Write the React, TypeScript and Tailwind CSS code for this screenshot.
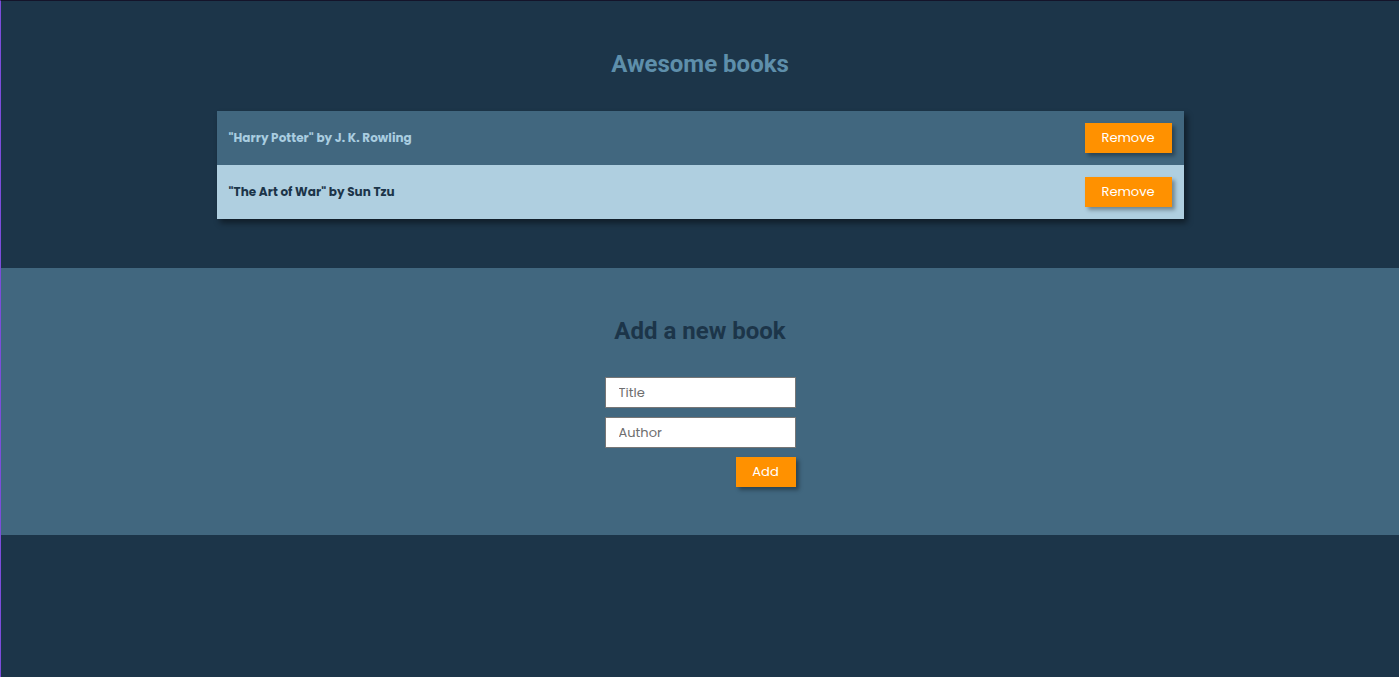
const books = [
  { title: 'Harry Potter', author: 'J. K. Rowling' },
  { title: 'The Art of War', author: 'Sun Tzu' },
]

export default function App() {
  return (
    <div
      className="min-h-[677px] bg-[#1c3549] border-t border-t-[#14142a] border-l border-l-[#7c4ddb]"
      style={{ fontFamily: '"Poppins", "Inter", "Noto Sans", sans-serif' }}
    >
      <section className="pt-[48px] pb-[49px]">
        <h1
          className="text-center text-[24px] leading-[30px] font-bold text-[#5e8fab]"
          style={{ fontFamily: 'Roboto, sans-serif' }}
        >
          Awesome books
        </h1>
        <ul className="w-[967px] mx-auto mt-[32px] shadow-[3px_4px_6px_rgba(0,0,0,0.45)]">
          {books.map((b, i) => (
            <li
              key={b.title}
              className={
                'h-[54px] flex items-center justify-between pl-[12px] pr-[12px] ' +
                (i % 2 === 0 ? 'bg-[#41677f] text-[#a9cde0]' : 'bg-[#afcfe0] text-[#1c3549]')
              }
            >
              <span className="text-[12px] font-bold tracking-[0.05px]">
                "{b.title}" by {b.author}
              </span>
              <button className="w-[87px] h-[30px] bg-[#ff9100] text-white text-[13px] shadow-[3px_3px_4px_rgba(0,0,0,0.35)]">
                Remove
              </button>
            </li>
          ))}
        </ul>
      </section>

      <section className="bg-[#41677f] pt-[48px] pb-[48px]">
        <h2
          className="text-center text-[24px] leading-[30px] font-bold text-[#1c3549]"
          style={{ fontFamily: 'Roboto, sans-serif' }}
        >
          Add a new book
        </h2>
        <form className="w-[191px] mx-auto mt-[31px] flex flex-col gap-[9px]">
          <input
            placeholder="Title"
            className="h-[31px] bg-white border border-[#767676] px-[13px] text-[13px] placeholder:text-[#6e6e6e] outline-none"
          />
          <input
            placeholder="Author"
            className="h-[31px] bg-white border border-[#767676] px-[13px] text-[13px] placeholder:text-[#6e6e6e] outline-none"
          />
          <div className="flex justify-end">
            <button
              type="button"
              className="w-[60px] h-[30px] bg-[#ff9100] text-white text-[13px] shadow-[3px_3px_4px_rgba(0,0,0,0.35)]"
            >
              Add
            </button>
          </div>
        </form>
      </section>
    </div>
  )
}
